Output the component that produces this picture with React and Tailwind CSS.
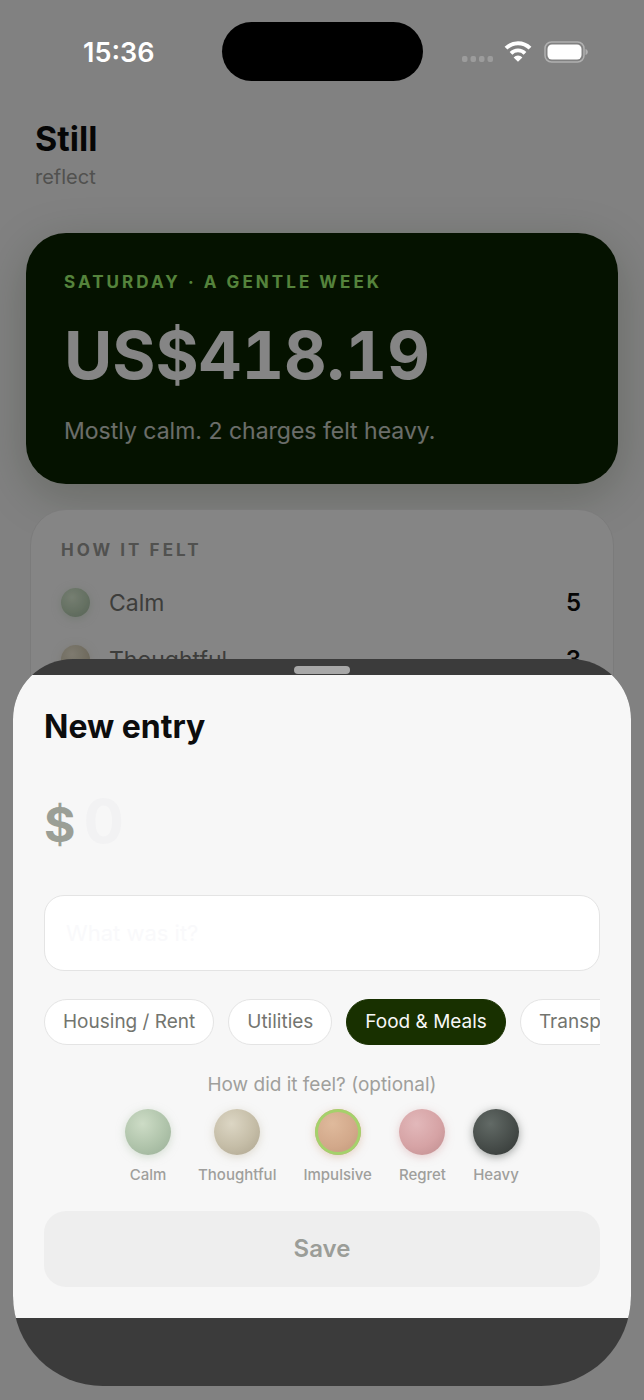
import React, { useState } from 'react';
import clsx from 'clsx';

const feelings = [
  { name: 'Calm', orb: 'bg-[radial-gradient(circle_at_38%_32%,#cddcc6,#b0c4ab_55%,#98ae96)] shadow-[0_2px_8px_#b0c4ab80]' },
  { name: 'Thoughtful', orb: 'bg-[radial-gradient(circle_at_38%_32%,#dcd6c4,#c5bda7_55%,#aca38d)] shadow-[0_2px_8px_#c5bda780]' },
  { name: 'Impulsive', orb: 'bg-[radial-gradient(circle_at_38%_32%,#dfba9c,#d2a88a_55%,#bd9376)] shadow-[0_2px_8px_#d2a88a80]' },
  { name: 'Regret', orb: 'bg-[radial-gradient(circle_at_38%_32%,#e2b8ba,#d6a3a5_55%,#be8c8e)] shadow-[0_2px_8px_#d6a3a580]' },
  { name: 'Heavy', orb: 'bg-[radial-gradient(circle_at_38%_32%,#626a66,#474d4a_55%,#313533)] shadow-[0_2px_8px_#474d4a80]' },
];

const categories = ['Housing / Rent', 'Utilities', 'Food & Meals', 'Transport'];

const counts = [
  { feeling: feelings[0], count: 5 },
  { feeling: feelings[1], count: 3 },
];

const StatusBar = () => (
  <header className="relative z-10 grid grid-cols-[1fr_auto_1fr] items-center pt-[22px]">
    <span className="pt-0.5 pl-[83px] text-[27px] leading-8 font-semibold text-white">15:36</span>
    <div className="h-[59px] w-[201px] rounded-[30px] bg-black" />
    <div className="flex items-center justify-end pr-14">
      <svg width="33" height="20" viewBox="0 0 33 20" fill="#9c9c9c" aria-hidden="true">
        <rect x="1" y="14" width="5.5" height="6" rx="2" />
        <rect x="9.5" y="14" width="5.5" height="6" rx="2" />
        <rect x="18" y="14" width="5.5" height="6" rx="2" />
        <rect x="26.5" y="14" width="5.5" height="6" rx="2" />
      </svg>
      <svg className="ml-2.5" width="28" height="21" viewBox="0 0 28 21" fill="none" stroke="#fff" aria-hidden="true">
        <path d="M2 7.2a17 17 0 0 1 24 0" strokeWidth="4" />
        <path d="M7 12.4a9.8 9.8 0 0 1 14 0" strokeWidth="3.8" />
        <path d="M14 20.8 9.6 16.4a6.2 6.2 0 0 1 8.8 0Z" fill="#fff" stroke="none" />
      </svg>
      <svg className="ml-3" width="44" height="22" viewBox="0 0 44 22" aria-hidden="true">
        <rect x="1" y="1" width="39" height="20" rx="6.5" fill="none" stroke="#b0b0b0" strokeWidth="1.5" />
        <rect x="3.5" y="3.5" width="34" height="15" rx="4.5" fill="#fff" />
        <path d="M41.5 8c1.6.5 2.3 1.7 2.3 3s-.7 2.5-2.3 3Z" fill="#b0b0b0" />
      </svg>
    </div>
  </header>
);

const SummaryCard = () => (
  <section className="mx-[26px] mt-10 rounded-[40px] bg-[#0b2300] px-[38px] pt-9 pb-[37px] shadow-[0_12px_48px_#1b300038]">
    <h2 className="text-[17px] leading-[26px] font-bold tracking-[0.18em] text-[#a4fc74]">SATURDAY · A GENTLE WEEK</h2>
    <p className="mt-5 text-[66px] leading-[80px] font-bold tabular-nums text-white">US$418.19</p>
    <p className="mt-5 text-[23px] leading-8 text-white/80">Mostly calm. 2 charges felt heavy.</p>
  </section>
);

const FeltCard = () => (
  <section className="mx-[30px] mt-[25px] rounded-[36px] border border-[#ececec] bg-white pt-7 pr-8 pb-24 pl-[30px]">
    <h2 className="text-[17px] leading-6 font-bold tracking-[0.18em] text-[#9b9b98]">HOW IT FELT</h2>
    <ul className="mt-[26px] flex flex-col gap-7">
      {counts.map(({ feeling, count }) => (
        <li key={feeling.name} className="flex items-center leading-7">
          <span className={clsx('size-[29px] rounded-full brightness-110', feeling.orb)} />
          <span className="ml-[19px] text-[23px] text-[#767672]">{feeling.name}</span>
          <span className="ml-auto text-2xl leading-7 font-semibold text-[#0d0d0d]">{count}</span>
        </li>
      ))}
    </ul>
  </section>
);

const EntrySheet = () => {
  const [amount, setAmount] = useState('');
  const [note, setNote] = useState('');
  const [category, setCategory] = useState('Food & Meals');
  const [feeling, setFeeling] = useState('Impulsive');

  return (
    <div
      role="dialog"
      aria-labelledby="sheet-title"
      className="absolute inset-x-[13px] bottom-3.5 overflow-hidden rounded-t-[60px] rounded-b-[90px] bg-[#3b3b3b] pb-[68px]"
    >
      <div className="flex h-4 items-end justify-center pb-px">
        <span className="h-2 w-14 rounded-full bg-[#a8a8a8]" />
      </div>

      <form className="bg-[#f7f7f7] px-[31px] pt-8 pb-[31px]" onSubmit={(e) => e.preventDefault()}>
        <h2 id="sheet-title" className="text-[32px] leading-10 font-bold text-[#0d0d0d]">New entry</h2>

        <div className="mt-8 flex items-center gap-2">
          <label htmlFor="amount" className="pt-2 text-5xl font-bold text-[#9b9f96]">$</label>
          <input
            id="amount"
            inputMode="decimal"
            placeholder="0"
            value={amount}
            onChange={(e) => setAmount(e.target.value)}
            className="h-[84px] w-full min-w-0 text-6xl font-bold text-[#0d0d0d] outline-none placeholder:text-[#f2f2f3]"
          />
        </div>

        <input
          aria-label="What was it?"
          placeholder="What was it?"
          value={note}
          onChange={(e) => setNote(e.target.value)}
          className="mt-8 h-[76px] w-full rounded-[20px] border border-[#e4e4e4] bg-white px-[21px] text-[22px] text-[#0d0d0d] outline-none placeholder:text-[#f9f9fb]"
        />

        <div className="mt-7 flex gap-3.5 overflow-x-auto [scrollbar-width:none]">
          {categories.map((name) => (
            <button
              key={name}
              type="button"
              aria-pressed={category === name}
              onClick={() => setCategory(name)}
              className={clsx(
                'h-[46px] shrink-0 rounded-full border px-[18px] text-[19px] whitespace-nowrap',
                category === name ? 'border-[#183000] bg-[#183000] text-[#f7f7f7]' : 'border-[#e4e4e4] bg-white text-[#73756f]'
              )}
            >
              {name}
            </button>
          ))}
        </div>

        <fieldset className="mt-7">
          <legend className="mx-auto text-[19px] leading-6 text-[#9f9f9c]">How did it feel? (optional)</legend>
          <div className="mt-3 flex justify-center gap-[27px]">
            {feelings.map(({ name, orb }) => (
              <label key={name} className="flex flex-col items-center text-[15px] leading-5 font-medium text-[#9f9f9c]">
                <input
                  type="radio"
                  name="feeling"
                  value={name}
                  checked={feeling === name}
                  onChange={() => setFeeling(name)}
                  className={clsx('mb-2.5 size-[46px] appearance-none rounded-full checked:inset-ring-3 checked:inset-ring-[#a5d16b]', orb)}
                />
                {name}
              </label>
            ))}
          </div>
        </fieldset>

        <button type="submit" className="mt-[26px] h-[76px] w-full rounded-[22px] bg-[#eeeeee] text-2xl font-semibold text-[#9b9d98]">
          Save
        </button>
      </form>
    </div>
  );
};

export default function App() {
  return (
    <div className="relative min-h-screen overflow-hidden bg-[#f7f7f7] font-['Inter',sans-serif]">
      <StatusBar />
      <main>
        <div className="mt-9 px-[35px]">
          <h1 className="text-[34px] leading-[44px] font-bold text-[#0d0d0d]">Still</h1>
          <p className="text-xl leading-8 text-[#9b9b98]">reflect</p>
        </div>
        <SummaryCard />
        <FeltCard />
      </main>
      <div className="absolute inset-0 bg-black/48" />
      <EntrySheet />
    </div>
  );
}
